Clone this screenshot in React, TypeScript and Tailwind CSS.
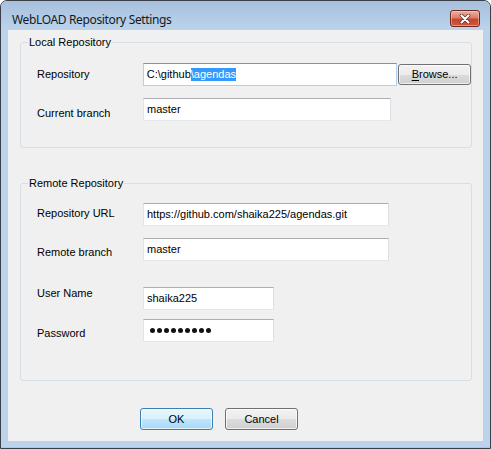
import type { ReactNode } from 'react';

const boxIdle = 'border-t-[#abadb3] border-l-[#e2e3ea] border-r-[#dbdfe6] border-b-[#e3e9ef]';
const boxFocus = 'border-t-[#569de5] border-l-[#b1cfee] border-r-[#b1cfee] border-b-[#b1cfee]';

function TextBox({ className, focused, children }: { className: string; focused?: boolean; children: ReactNode }) {
    return (
        <div className={`h-[23px] flex items-center pl-[3px] bg-white border whitespace-nowrap ${focused ? boxFocus : boxIdle} ${className}`}>
            {children}
        </div>
    );
}

// labels are not centred on their boxes in the original dialog, so each gets its own top offset
function Row({ label, labelClass, className = '', children }: { label: string; labelClass: string; className?: string; children: ReactNode }) {
    return (
        <div className={`flex items-start ${className}`}>
            <div className={`w-[106px] leading-[13px] ${labelClass}`}>{label}</div>
            {children}
        </div>
    );
}

function GroupBox({ title, className, children }: { title: string; className: string; children: ReactNode }) {
    return (
        <div className={`relative ml-[12px] w-[452px] border border-[#d5dfe5] rounded-[3px] pl-[16px] ${className}`}>
            {/* caption sits on the top edge */}
            <span className="absolute -top-[7px] left-[7px] px-[1px] leading-[13px] bg-[#f0f0f0]">{title}</span>
            {children}
        </div>
    );
}

function PushButton({ className, isDefault, children }: { className: string; isDefault?: boolean; children: ReactNode }) {
    const look = isDefault
        ? 'border-[#3c7fb1] bg-[linear-gradient(to_bottom,#eaf6fd_0%,#d9f0fc_50%,#bee6fd_50%,#a7d9f5_100%)]'
        : 'border-[#707070] bg-[linear-gradient(to_bottom,#f2f2f2_0%,#ebebeb_50%,#dddddd_50%,#cfcfcf_100%)]';
    return (
        <div className={`flex items-center justify-center border rounded-[3px] shadow-[inset_0_0_0_1px_rgba(255,255,255,0.7)] ${look} ${className}`}>
            {children}
        </div>
    );
}

function CloseButton() {
    return (
        <div className="w-[30px] h-[17px] flex items-center justify-center rounded-[3px] border border-[#6f2a20] bg-[linear-gradient(to_bottom,#eab0a2_0%,#dc7f6b_45%,#c7452c_55%,#d0583c_100%)] shadow-[inset_0_0_0_1px_rgba(255,220,210,0.45)]">
            <svg width="12" height="10" viewBox="0 0 12 10">
                <path d="M2.5 1.5 L9.5 8.5 M9.5 1.5 L2.5 8.5" stroke="#5b2a24" strokeWidth="3.6" strokeLinecap="round" />
                <path d="M2.5 1.5 L9.5 8.5 M9.5 1.5 L2.5 8.5" stroke="#ffffff" strokeWidth="2.2" strokeLinecap="round" />
            </svg>
        </div>
    );
}

export default function App() {
    const dots = Array.from({ length: 9 });

    return (
        <div className="w-[491px] h-[449px] bg-white font-['Liberation_Sans',Arial,sans-serif] text-[11px] text-black">
            <div className="w-full h-full flex flex-col rounded-t-[7px] border border-[#3b4048] bg-[#bbd3ec] overflow-hidden shadow-[inset_0_-1px_0_#8fd6ea]">
                {/* Title bar */}
                <div className="h-[29px] shrink-0 flex items-start justify-between pl-[11px] pr-[10px] bg-[linear-gradient(to_bottom,#a7c0dd,#bcd3eb)]">
                    <span className="pt-[12px] leading-[14px] text-[12px] tracking-[-0.35px] text-[#141a22] font-['Noto_Sans',sans-serif]">
                        WebLOAD Repository Settings
                    </span>
                    <div className="pt-[9px]">
                        <CloseButton />
                    </div>
                </div>

                {/* Client area */}
                <div className="flex-1 mx-[7px] mb-[7px] bg-[#f0f0f0] flex flex-col">
                    <GroupBox title="Local Repository" className="mt-[12px] h-[106px] pt-[20px]">
                        <Row label="Repository" labelClass="pt-[5px]">
                            <TextBox className="w-[255px]" focused>
                                <span>C:\github</span>
                                <span className="bg-[#3399ff] text-white leading-[13px]">\agendas</span>
                            </TextBox>
                            <PushButton className="ml-[1px] mt-[1px] w-[73px] h-[21px]">
                                <span>
                                    <span className="underline underline-offset-2">B</span>rowse...
                                </span>
                            </PushButton>
                        </Row>
                        <Row label="Current branch" labelClass="pt-[9px]" className="mt-[12px]">
                            <TextBox className="w-[248px]">master</TextBox>
                        </Row>
                    </GroupBox>

                    <GroupBox title="Remote Repository" className="mt-[35px] h-[198px] pt-[19px]">
                        <Row label="Repository URL" labelClass="pt-[4px]">
                            <TextBox className="w-[246px]">https://github.com/shaika225/agendas.git</TextBox>
                        </Row>
                        <Row label="Remote branch" labelClass="pt-[8px]" className="mt-[12px]">
                            <TextBox className="w-[246px]">master</TextBox>
                        </Row>
                        <Row label="User Name" labelClass="pt-0" className="mt-[26px]">
                            <TextBox className="w-[131px]">shaika225</TextBox>
                        </Row>
                        <Row label="Password" labelClass="pt-[8px]" className="mt-[9px]">
                            <TextBox className="w-[131px]">
                                <div className="flex gap-[2px] pl-[3px]">
                                    {dots.map((_, i) => (
                                        <span key={i} className="w-[5px] h-[5px] rounded-full bg-[#111]" />
                                    ))}
                                </div>
                            </TextBox>
                        </Row>
                    </GroupBox>

                    <div className="flex mt-[27px] ml-[132px]">
                        <PushButton className="w-[73px] h-[22px]" isDefault>
                            OK
                        </PushButton>
                        <PushButton className="ml-[12px] w-[73px] h-[22px]">Cancel</PushButton>
                    </div>
                </div>
            </div>
        </div>
    );
}
